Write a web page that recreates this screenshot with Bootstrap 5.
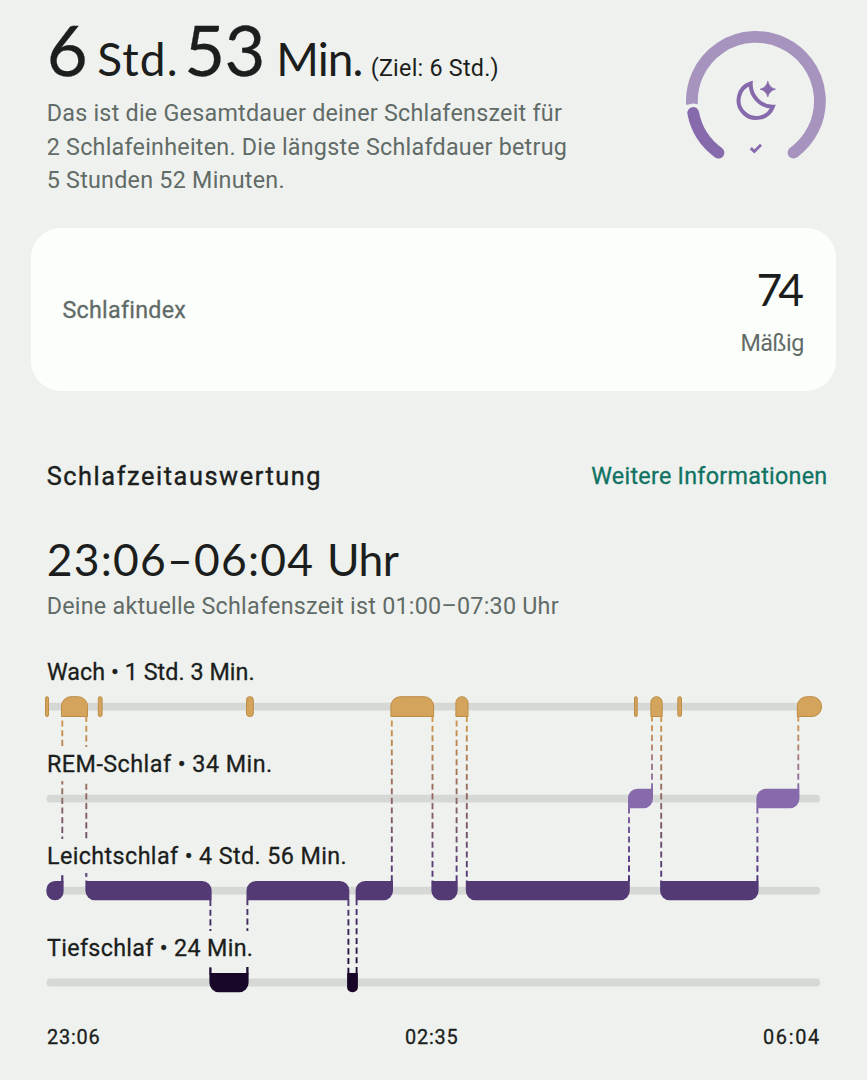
<!DOCTYPE html>
<html lang="de">
<head>
<meta charset="utf-8">
<meta name="viewport" content="width=device-width, initial-scale=1">
<title>Schlafzeitauswertung</title>
<link rel="stylesheet" href="https://cdn.jsdelivr.net/npm/bootstrap@5.3.0/dist/css/bootstrap.min.css">
<style>
  body { background: #eff1ee; color: #1b1e1c; font-family: Roboto, "Liberation Sans", sans-serif; font-size: 23.3px; line-height: 34px; letter-spacing: .25px; overflow-x: hidden; }
  .screen { width: 867px; height: 1080px; overflow: hidden; }
  .inset { padding-left: 46.7px; padding-right: 39.5px; }
  .muted { color: #616b67; }
  .display-num { font-family: Lato, "Open Sans", sans-serif; }
  .semi { -webkit-text-stroke: .3px currentColor; }
  .duration { height: 97.2px; }
  .duration span { white-space: nowrap; line-height: 1; }
  .duration .num { font-size: 70.5px; line-height: 98px; -webkit-text-stroke: .3px currentColor; }
  .duration .unit { font-size: 46px; }
  .w-hour { width: 50.5px; } .w-std { width: 87px; letter-spacing: 1.1px; }
  .w-min { width: 92px; letter-spacing: -.6px; } .w-unit { width: 94.5px; letter-spacing: -.9px; }
  .duration .goal { font-family: Roboto, "Liberation Sans", sans-serif; font-size: 23.3px; }
  .summary { line-height: 33.6px; }
  .gauge { width: 142px; height: 132px; margin-top: 29px; margin-right: .8px; }
  .score-card { margin: 30.5px 31px 0; height: 162.5px; padding: 0 32px 0 31.5px; border-radius: 30px; background: #fcfefb; }
  .score { margin-top: 2px; font-size: 44.5px; line-height: 54px; letter-spacing: -4px; padding-right: 4px; }
  .score-note { margin-top: 9.7px; letter-spacing: -.4px; }
  .section-head { margin-top: 68.3px; }
  .section-head h2 { padding-top: 1px; font-size: 25.3px; line-height: 33px; font-weight: 400; letter-spacing: 1.58px; -webkit-text-stroke: .4px currentColor; }
  .more { color: #0f7362; letter-spacing: .28px; text-decoration: none; }
  .period { margin-top: 36px; font-size: 44.4px; line-height: 60px; letter-spacing: 1.25px; }
  .period .uhr { letter-spacing: -.6px; }
  .chart { margin-top: 32px; height: 368px; }
  .chart svg { position: absolute; left: 0; top: 0; }
  .stage { height: 92px; }
  .stage span { position: relative; z-index: 1; height: 34px; line-height: 34.6px; margin-left: 46px; padding-left: 1px; padding-right: 3px; background: #eff1ee; white-space: pre; }
  .ls-wach { letter-spacing: .05px; } .ls-rem { letter-spacing: .48px; } .ls-leicht { letter-spacing: .4px; } .ls-tief { letter-spacing: .32px; }
  .chart .bars { z-index: 2; }
  .axis { margin-top: 1.9px; padding-left: 47px; padding-right: 47px; font-size: 19.9px; line-height: 26px; letter-spacing: .8px; }
  .axis .end { letter-spacing: 1.7px; margin-right: -1px; }
</style>
</head>
<body>
<main class="screen">
  <header class="d-flex justify-content-between inset">
    <div>
      <h1 class="duration display-num d-flex align-items-baseline m-0 fw-normal">
        <span class="num w-hour">6</span><span class="unit w-std">Std.</span><span class="num w-min">53</span><span class="unit w-unit">Min.</span><span class="goal">(Ziel: 6 Std.)</span>
      </h1>
      <p class="summary muted m-0">Das ist die Gesamtdauer deiner Schlafenszeit für<br>2 Schlafeinheiten. Die längste Schlafdauer betrug<br>5 Stunden 52 Minuten.</p>
    </div>
    <svg class="gauge flex-shrink-0" viewBox="685.5 29.5 142 132" fill="none" stroke-linecap="round">
      <path d="M692.5 105A64 64 0 1 1 794 153.2" stroke="#a694bf" stroke-width="11.8" stroke-linecap="butt"/>
      <circle cx="794" cy="153.2" r="5.9" fill="#a694bf"/>
      <path d="M693.7 113.5A64 64 0 0 0 719 153.2" stroke="#eff1ee" stroke-width="19"/>
      <path d="M693.7 113.5A64 64 0 0 0 719 153.2" stroke="#866aab" stroke-width="11.8"/>
      <path d="M751.2 84A17.7 17.7 0 1 0 773.3 107.2C762 107.4 750.6 97 751.2 84Z" stroke="#866aab" stroke-width="4" stroke-linejoin="miter" stroke-linecap="butt"/>
      <path d="M768.3 82Q769.8 88.2 776 89.7Q769.8 91.2 768.3 97.4Q766.8 91.2 760.6 89.7Q766.8 88.2 768.3 82Z" fill="#866aab" stroke="#866aab" stroke-width=".7"/>
      <path d="M751.3 148.6L754.8 152L761.5 145.3" stroke="#866aab" stroke-width="2.9" stroke-linecap="butt"/>
    </svg>
  </header>

  <section class="score-card d-flex align-items-center justify-content-between">
    <div class="muted semi">Schlafindex</div>
    <div class="text-end">
      <div class="score display-num">74</div>
      <div class="score-note muted">Mäßig</div>
    </div>
  </section>

  <section>
    <div class="section-head inset d-flex justify-content-between">
      <h2 class="m-0">Schlafzeitauswertung</h2>
      <a class="more semi" href="#">Weitere Informationen</a>
    </div>
    <div class="period inset display-num">23:06–06:04 <span class="uhr">Uhr</span></div>
    <div class="inset muted">Deine aktuelle Schlafenszeit ist 01:00–07:30 Uhr</div>

    <div class="chart position-relative">
      <svg id="links" width="867" height="368" viewBox="0 655 867 368">
        <defs>
          <linearGradient id="wl" gradientUnits="userSpaceOnUse" x1="0" y1="717" x2="0" y2="881"><stop offset="0" stop-color="#d0994e"/><stop offset="1" stop-color="#4f3578"/></linearGradient>
          <linearGradient id="wr" gradientUnits="userSpaceOnUse" x1="0" y1="717" x2="0" y2="789"><stop offset="0" stop-color="#d39b4c"/><stop offset="1" stop-color="#866aab"/></linearGradient>
          <linearGradient id="rl" gradientUnits="userSpaceOnUse" x1="0" y1="808" x2="0" y2="881"><stop offset="0" stop-color="#7d60a6"/><stop offset="1" stop-color="#4a2c78"/></linearGradient>
          <linearGradient id="lt" gradientUnits="userSpaceOnUse" x1="0" y1="900" x2="0" y2="973"><stop offset="0" stop-color="#533a75"/><stop offset="1" stop-color="#1b0a33"/></linearGradient>
        </defs>
      </svg>
      <div class="stage d-flex"><span class="ls-wach semi">Wach • 1 Std. 3 Min.</span></div>
      <div class="stage d-flex"><span class="ls-rem semi">REM-Schlaf • 34 Min.</span></div>
      <div class="stage d-flex"><span class="ls-leicht semi">Leichtschlaf • 4 Std. 56 Min.</span></div>
      <div class="stage d-flex"><span class="ls-tief semi">Tiefschlaf • 24 Min.</span></div>
      <svg id="bars" class="bars" width="867" height="368" viewBox="0 655 867 368"></svg>
    </div>
    <div class="axis semi d-flex justify-content-between"><span>23:06</span><span>02:35</span><span class="end">06:04</span></div>
  </section>
</main>
<script src="https://cdn.jsdelivr.net/npm/bootstrap@5.3.0/dist/js/bootstrap.bundle.min.js"></script>
<script>
  const NS = 'http://www.w3.org/2000/svg';
  const add = (parent, tag, attrs) => {
    const el = document.createElementNS(NS, tag);
    for (const k in attrs) el.setAttribute(k, attrs[k]);
    parent.appendChild(el);
  };
  const links = document.getElementById('links'), bars = document.getElementById('bars');

  // Grey tracks, one per sleep stage
  [706.7, 798.7, 890.7, 982.5].forEach(y =>
    add(links, 'line', { x1: 50.4, x2: 816.3, y1: y, y2: y, stroke: '#d5d8d4', 'stroke-width': 7.8, 'stroke-linecap': 'round' }));

  // Transitions: x, start y, end y, gradient
  [[62.3, 881.3, 717, 'wl'], [86.3, 716, 881, 'wl'], [210.4, 900, 973, 'lt'], [247.4, 973, 900, 'lt'],
   [348.4, 900, 973, 'lt'], [356.6, 973, 900, 'lt'], [391.8, 881.3, 717, 'wl'], [432.5, 716, 881, 'wl'],
   [456.6, 881.3, 717, 'wl'], [466.8, 716, 881, 'wl'], [629, 881.3, 808, 'rl'], [652, 789.3, 717, 'wr'],
   [661.2, 716, 881, 'wl'], [757.4, 881.3, 808, 'rl'], [798.3, 789.3, 717, 'wr']
  ].forEach(([x, a, b, g]) =>
    add(links, 'line', { x1: x, x2: x, y1: a, y2: b, stroke: `url(#${g})`, 'stroke-width': 1.9, 'stroke-dasharray': '6.1 3.57' }));

  // Short stubs that stay visible under the labels
  [[62.3, 875.5, 883, '#533a75'], [86.3, 873.5, 876.5, '#6a5086'], [210.4, 967.3, 975, '#1f0e38'], [247.4, 967, 975, '#1f0e38']
  ].forEach(([x, a, b, c]) => add(bars, 'line', { x1: x, x2: x, y1: a, y2: b, stroke: c, 'stroke-width': 1.8 }));

  // Segments: stage, left, right, corner radii (tl, tr, br, bl)
  const stages = {
    w: { y: 696.7, b: 716.5, fill: '#d4a45d', stroke: '#bd8c45', inset: .5 },
    r: { y: 788.8, b: 808.2, fill: '#866aab' },
    l: { y: 881, b: 900.3, fill: '#533a75' },
    t: { y: 973, b: 992.3, fill: '#190729' }
  };
  [['w', 45, 49, 1.5, 1.5, 1.5, 1.5], ['w', 61, 88, 9.5, 9.5, 0, 0], ['w', 97.8, 102.6, 1.7, 1.7, 1.7, 1.7],
   ['w', 246, 253.8, 3, 3, 3, 3], ['w', 390.4, 434.1, 9.5, 9.5, 0, 0], ['w', 455.4, 468.5, 6, 6, 0, 0],
   ['w', 634, 637.7, 1.3, 1.3, 1.3, 1.3], ['w', 650.4, 662.7, 5.6, 5.6, 0, 0], ['w', 677.3, 682, 1.7, 1.7, 1.7, 1.7],
   ['w', 796.8, 822, 9.5, 9.5, 9.5, 0],
   ['r', 628, 653, 9.5, 0, 9.5, 0], ['r', 756.4, 799.4, 9.5, 0, 9.5, 0],
   ['l', 46.4, 63.6, 8.6, 0, 8.6, 8.6], ['l', 85.4, 211.6, 0, 9.5, 0, 9.5], ['l', 246.5, 349.3, 9.5, 9.5, 0, 0],
   ['l', 355.6, 393, 9.5, 0, 9.5, 0], ['l', 431.4, 457.7, 0, 0, 9.5, 9.5], ['l', 465.8, 629.8, 0, 0, 9.5, 9.5],
   ['l', 660.1, 758.6, 0, 0, 9.5, 9.5],
   ['t', 209.4, 248.6, 0, 0, 9.5, 9.5], ['t', 347.1, 357.9, 0, 0, 5, 5]
  ].forEach(([s, x1, x2, tl, tr, br, bl]) => {
    const st = stages[s], i = st.inset || 0, l = x1 + i, r = x2 - i, t = st.y, b = st.b;
    add(bars, 'path', {
      d: `M${l + tl} ${t}H${r - tr}A${tr} ${tr} 0 0 1 ${r} ${t + tr}V${b - br}A${br} ${br} 0 0 1 ${r - br} ${b}H${l + bl}A${bl} ${bl} 0 0 1 ${l} ${b - bl}V${t + tl}A${tl} ${tl} 0 0 1 ${l + tl} ${t}Z`,
      fill: st.fill, stroke: st.stroke || 'none', 'stroke-width': 1
    });
  });
</script>
</body>
</html>
